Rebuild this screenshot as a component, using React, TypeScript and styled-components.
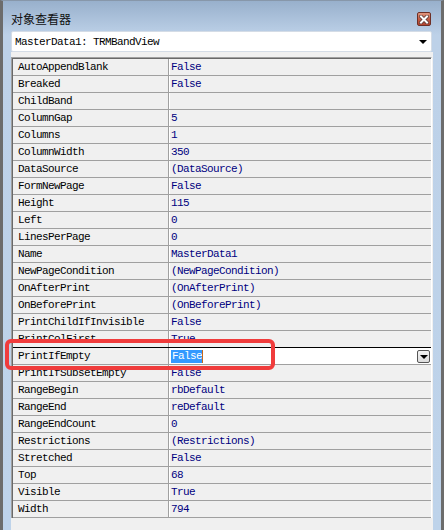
import * as React from 'react';
import styled, { createGlobalStyle } from 'styled-components';

interface PropRow {
  name: string;
  value: string;
}

const rows: PropRow[] = [
  { name: 'AutoAppendBlank', value: 'False' },
  { name: 'Breaked', value: 'False' },
  { name: 'ChildBand', value: '' },
  { name: 'ColumnGap', value: '5' },
  { name: 'Columns', value: '1' },
  { name: 'ColumnWidth', value: '350' },
  { name: 'DataSource', value: '(DataSource)' },
  { name: 'FormNewPage', value: 'False' },
  { name: 'Height', value: '115' },
  { name: 'Left', value: '0' },
  { name: 'LinesPerPage', value: '0' },
  { name: 'Name', value: 'MasterData1' },
  { name: 'NewPageCondition', value: '(NewPageCondition)' },
  { name: 'OnAfterPrint', value: '(OnAfterPrint)' },
  { name: 'OnBeforePrint', value: '(OnBeforePrint)' },
  { name: 'PrintChildIfInvisible', value: 'False' },
  { name: 'PrintColFirst', value: 'True' },
  { name: 'PrintIfEmpty', value: 'False' },
  { name: 'PrintIfSubsetEmpty', value: 'False' },
  { name: 'RangeBegin', value: 'rbDefault' },
  { name: 'RangeEnd', value: 'reDefault' },
  { name: 'RangeEndCount', value: '0' },
  { name: 'Restrictions', value: '(Restrictions)' },
  { name: 'Stretched', value: 'False' },
  { name: 'Top', value: '68' },
  { name: 'Visible', value: 'True' },
  { name: 'Width', value: '794' },
];

const SELECTED = 'PrintIfEmpty';

const GlobalStyle = createGlobalStyle`
  html, body {
    margin: 0;
    padding: 0;
    background: #ffffff;
  }
`;

export default function App() {
  return (
    <>
      <GlobalStyle />
      <Window>
        <TitleBar>
          <Title>对象查看器</Title>
          <CloseButton>
            <svg width="10" height="9" viewBox="0 0 10 9">
              <path d="M2 1.5 L8 7.5 M8 1.5 L2 7.5" stroke="#5a3a36" strokeWidth="3.6" strokeLinecap="square" />
              <path d="M2 1.5 L8 7.5 M8 1.5 L2 7.5" stroke="#ffffff" strokeWidth="2" strokeLinecap="square" />
            </svg>
          </CloseButton>
        </TitleBar>
        <Body>
          <Combo>
            <ComboText>MasterData1: TRMBandView</ComboText>
            <ComboArrow />
          </Combo>
          <Client>
            <Grid>
              {rows.map((r) => {
                const selected = r.name === SELECTED;
                return (
                  <Row key={r.name} $selected={selected}>
                    <NameCell>{r.name}</NameCell>
                    <ValueCell $selected={selected}>
                      {selected ? (
                        <>
                          <Selection>{r.value}</Selection>
                          <Caret />
                          <Spacer />
                          <DropButton>
                            <ComboArrow />
                          </DropButton>
                        </>
                      ) : (
                        r.value
                      )}
                    </ValueCell>
                  </Row>
                );
              })}
            </Grid>
          </Client>
        </Body>
        <Highlight />
      </Window>
    </>
  );
}

const Window = styled.div`
  position: relative;
  width: 444px;
  height: 530px;
  box-sizing: border-box;
  border-left: 3px solid #6c6c6c;
  border-right: 3px solid #6c6c6c;
  border-top: 1px solid #8797aa;
  background: linear-gradient(to bottom, #98b0cc 0px, #bdd1e8 34px, #bed3ea 100%);
  display: flex;
  flex-direction: column;
  overflow: hidden;
`;

const TitleBar = styled.div`
  height: 30px;
  display: flex;
  align-items: flex-start;
  justify-content: space-between;
  padding: 0 10px 0 8px;
`;

const Title = styled.div`
  margin-top: 9px;
  font-family: 'Noto Sans CJK SC', sans-serif;
  font-size: 12px;
  line-height: 17px;
  color: #111;
`;

const CloseButton = styled.div`
  margin-top: 11px;
  width: 14px;
  height: 14px;
  box-sizing: border-box;
  border: 1px solid #6e2f25;
  border-radius: 2px;
  background: linear-gradient(to bottom, #e0977f 0%, #c45c44 50%, #b04431 100%);
  display: flex;
  align-items: center;
  justify-content: center;
`;

const Body = styled.div`
  flex: 1;
  display: flex;
  flex-direction: column;
  padding: 0 8px;
`;

const Combo = styled.div`
  height: 21px;
  margin-right: 1px;
  box-sizing: border-box;
  border: 1px solid #d4dce6;
  border-radius: 2px;
  background: #ffffff;
  display: flex;
  align-items: center;
  justify-content: space-between;
  padding: 0 3px 0 3px;
`;

const mono = `
  font-family: 'Liberation Mono', 'DejaVu Sans Mono', monospace;
  font-size: 11px;
  letter-spacing: -0.6px;
`;

const ComboText = styled.span`
  ${mono}
  color: #000;
  line-height: 16px;
`;

const ComboArrow = styled.span`
  width: 0;
  height: 0;
  border-left: 4px solid transparent;
  border-right: 4px solid transparent;
  border-top: 4px solid #000;
  margin-right: 1px;
`;

const Client = styled.div`
  flex: 1;
  background: #f0f0f0;
  padding-top: 5px;
`;

const Grid = styled.div`
  margin-right: 1px;
  border-top: 1px solid #a0a0a0;
  border-left: 1px solid #a0a0a0;
  box-shadow: inset 1px 1px 0 #696969;
  padding: 1px 0 0 1px;
  border-right: 1px solid #ffffff;
`;

const Row = styled.div<{ $selected?: boolean }>`
  display: grid;
  grid-template-columns: 156px 1fr;
  height: 17px;
  box-sizing: border-box;
  border-bottom: 1px solid #a0a0a0;
  ${mono}
  line-height: 16px;
  box-shadow: ${(p) => (p.$selected ? '0 -1px 0 #000' : 'none')};
`;

const NameCell = styled.div`
  border-right: 1px solid #a0a0a0;
  padding-left: 5px;
  color: #000;
  white-space: nowrap;
  overflow: hidden;
`;

const ValueCell = styled.div<{ $selected?: boolean }>`
  border-left: 1px solid #ffffff;
  padding-left: 1px;
  color: #000080;
  white-space: nowrap;
  display: flex;
  align-items: center;
  background: ${(p) => (p.$selected ? '#ffffff' : 'transparent')};
`;

const Selection = styled.span`
  background: #3399ff;
  color: #ffffff;
  height: 13px;
  line-height: 13px;
  padding-left: 1px;
`;

const Caret = styled.span`
  width: 1px;
  height: 13px;
  background: #c66a1a;
`;

const Spacer = styled.span`
  flex: 1;
`;

const DropButton = styled.span`
  width: 13px;
  height: 13px;
  box-sizing: border-box;
  margin-right: 1px;
  border: 1px solid #555;
  border-radius: 2px;
  background: linear-gradient(to bottom, #f4f4f4, #dcdcdc);
  display: flex;
  align-items: center;
  justify-content: center;
  & > span {
    margin: 1px 0 0 0;
  }
`;

const Highlight = styled.div`
  position: absolute;
  left: 2px;
  top: 338px;
  width: 270px;
  height: 31px;
  box-sizing: border-box;
  border: 4px solid #f03c3c;
  border-radius: 6px;
  pointer-events: none;
`;
